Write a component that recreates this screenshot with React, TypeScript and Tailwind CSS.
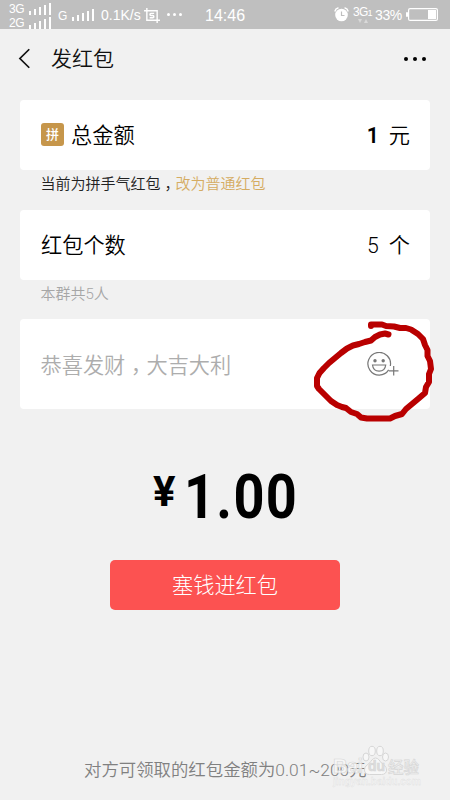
import type { ReactNode } from 'react'

const BARS = [4, 6, 8, 10, 12]

function SignalBars({ className = '' }: { className?: string }) {
  return (
    <div className={`flex items-end gap-[3px] ${className}`}>
      {BARS.map((height) => (
        <span key={height} className="w-[2px] bg-white" style={{ height }} />
      ))}
    </div>
  )
}

function StatusBar() {
  return (
    <div className="relative flex h-[29px] items-center bg-[#bfbfbf] font-['Liberation_Sans'] font-normal text-white">
      <div className="ml-[9px] w-[43px]">
        <div className="flex h-[14px] items-end">
          <span className="w-[20px] text-[12px] leading-[11px] tracking-[-0.5px]">3G</span>
          <SignalBars />
        </div>
        <div className="flex h-[14px] items-end">
          <span className="w-[20px] text-[12px] leading-[11px] tracking-[-0.5px]">2G</span>
          <SignalBars />
        </div>
      </div>
      <span className="ml-[6px] mt-[3px] w-[14px] text-[12px] leading-none">G</span>
      <SignalBars />
      <span className="ml-[7px] mt-px w-[41px] whitespace-nowrap text-[14px] leading-none">0.1K/s</span>
      <svg className="ml-[2px] mt-px h-[15px] w-[16px]" viewBox="0 0 17 16" fill="none" stroke="white" strokeWidth="1.5">
        <path d="M3 0v13h14M0 3h14v13" />
        <path d="M10.8 5.7H7.2c-1.2 0-1.2 2.3 0 2.3h2.3c1.3 0 1.3 2.4 0 2.4H6" />
      </svg>
      <div className="ml-[7px] flex gap-[3px]">
        <span className="size-[3px] rounded-full bg-white" />
        <span className="size-[3px] rounded-full bg-white" />
        <span className="size-[3px] rounded-full bg-white" />
      </div>

      <span className="ml-[23px] mt-[2px] text-[16px] leading-none">14:46</span>

      <div className="ml-auto mr-[12px] flex items-center">
        <svg className="mr-[4px] h-[15px] w-[15px]" viewBox="0 0 15 15" fill="none">
          <circle cx="7.5" cy="8" r="6.3" fill="white" />
          <path d="M1 4Q1.5 1.5 4 1M14 4q-.5-2.5-3-3" stroke="white" strokeWidth="1.4" strokeLinecap="round" />
          <path d="M7.5 4.5v4h3" stroke="#bfbfbf" strokeWidth="1.2" />
        </svg>
        <div className="w-[22px]">
          <div className="whitespace-nowrap text-[12px] leading-[12px] tracking-[-0.7px]">
            3G<span className="text-[9px]">1</span>
          </div>
          <svg className="ml-[5px] h-[4px] w-[10px]" viewBox="0 0 10 4" fill="#d9d9d9">
            <path d="M0 0h4L2 4zM6 4h4L8 0z" />
          </svg>
        </div>
        <span className="mt-px w-[31px] whitespace-nowrap text-[14px] leading-none tracking-[-0.4px]">33%</span>
        <svg className="h-[13px] w-[32px]" viewBox="0 0 32 13" fill="none">
          <rect x="2.6" y=".6" width="28.8" height="11.8" rx="1.5" stroke="white" strokeWidth="1.2" />
          <rect x="0" y="4" width="2" height="5" rx="1" fill="white" />
          <rect x="22" y="2" width="8" height="9" fill="white" />
        </svg>
      </div>
    </div>
  )
}

function NavBar() {
  return (
    <div className="flex h-[61px] items-center pl-[18px] pr-[24px]">
      <svg className="mb-[2px] h-[21px] w-[13px]" viewBox="0 0 13 22" fill="none" stroke="#111" strokeWidth="1.8">
        <path d="M11.5 1.3L1.7 11l9.8 9.7" />
      </svg>
      <h1 className="ml-[20px] text-[21px] leading-none font-[350] text-[#111]">发红包</h1>
      <div className="mb-px ml-auto flex gap-[5px]">
        <span className="size-[4px] rounded-full bg-black" />
        <span className="size-[4px] rounded-full bg-black" />
        <span className="size-[4px] rounded-full bg-black" />
      </div>
    </div>
  )
}

function Row({ label, value, unit }: { label: ReactNode; value: ReactNode; unit: string }) {
  return (
    <div className="flex h-[70px] items-center justify-between rounded-[4px] bg-white pl-[21px] pr-[20px] text-[21.2px] leading-none text-black">
      <div className="flex items-center">{label}</div>
      <div className="flex items-center gap-[10px] pt-[2px]">
        {value}
        <span>{unit}</span>
      </div>
    </div>
  )
}

// comma centred in its full-width cell, resting on the baseline
function Comma() {
  return <span className="inline-block translate-y-[0.3em] font-['Noto_Sans_CJK_TC']">，</span>
}

function EmojiIcon() {
  return (
    <svg className="mt-px h-[26px] w-[33px]" viewBox="0 0 33 26" fill="none" stroke="#777" strokeWidth="1.2">
      <path d="M21.7 17.9A11.3 11.3 0 1 1 23.3 14" />
      <circle cx="8" cy="8.7" r="1.7" fill="#777" stroke="none" />
      <circle cx="16.2" cy="8.7" r="1.7" fill="#777" stroke="none" />
      <path d="M5.5 13h13.2c-.4 3.7-3 6.2-6.6 6.2S5.9 16.7 5.5 13z" />
      <path d="M22 18.8h9.5M26.7 14v9.5" />
    </svg>
  )
}

// hand-drawn marker around the emoji button
function MarkerCircle() {
  return (
    <svg
      className="pointer-events-none absolute left-[292px] top-[-1px] h-[110px] w-[125px]"
      viewBox="312 318 125 110"
      fill="none"
      stroke="#b90000"
      strokeWidth="6"
      strokeLinecap="round"
      strokeLinejoin="round"
    >
      <path d="M388.5 334.5L385 333.5 380 334.5 375 337 371 340.5 365 342 359 344 353 345.5 347 348.5 341 353 335 358 329 363 324 368 319.5 373 317 378 317 386 319 389 323 393 327 397 331 401 337 405 342 407 346 408 351 412 357 414 361 417.5 367 418.5H390L395 416 402 414 406 409 412 404 418 399 425 393 426 387 429 382 429 374 431 369 430 361 427.5 356 427.5 350 425 345 423 339 418 334 411 329.5 406 328 400 328 394 326.5 386 326 382 324.5H371L371 326" />
    </svg>
  )
}

function Watermark() {
  return (
    <div className="absolute left-[333px] top-[745px] h-[46px] w-[94px] font-['Liberation_Sans'] font-bold">
      <svg className="absolute left-[29px] top-0 h-[30px] w-[27px]" viewBox="0 0 27 30" fill="#f7f7f7" stroke="#d6d6d6" strokeWidth="1">
        <ellipse cx="4" cy="12" rx="3" ry="4" />
        <ellipse cx="10" cy="6" rx="3.3" ry="4.7" />
        <ellipse cx="18" cy="6" rx="3.3" ry="4.7" />
        <ellipse cx="23.5" cy="12" rx="3" ry="4" />
        <path d="M13.5 13c-3 0-4 3-6 5s-5 3-5 7c0 3 2 4.5 5 4.5h12c3 0 5-1.5 5-4.5 0-4-3-5-5-7s-3-5-6-5z" />
      </svg>
      <div className="absolute left-0 top-[11px] flex items-center whitespace-nowrap text-[20px] leading-[20px] text-[#f8f8f8]/80 [-webkit-text-stroke:0.6px_#d6d6d6]">
        <span className="w-[35px] tracking-[-0.5px]">Bai</span>
        <span className="w-[20px] text-[14px] text-[#ddd]">du</span>
        <span className="font-['Noto_Sans_CJK_SC'] text-[15.5px] font-medium text-[#eee]">经验</span>
      </div>
      <div className="absolute left-0 top-[32px] whitespace-nowrap text-[10px] leading-none text-[#f4f4f4] [-webkit-text-stroke:0.3px_#dcdcdc]">
        jingyan.baidu.com
      </div>
    </div>
  )
}

export default function App() {
  return (
    <div className="relative flex h-[800px] w-[450px] flex-col overflow-hidden bg-[#f1f1f1] font-['Roboto','Noto_Sans_CJK_SC',sans-serif] font-[350]">
      <StatusBar />
      <NavBar />

      <main className="px-[20px] pt-[10px]">
        <Row
          label={
            <>
              <span className="mr-[7px] flex size-[23px] items-center justify-center rounded-[3px] bg-[#c6964b] text-[13px] font-medium text-white">
                拼
              </span>
              <span className="pt-[2px]">总金额</span>
            </>
          }
          value={<span className="font-semibold">1</span>}
          unit="元"
        />
        <p className="h-[40px] pl-[20.5px] pt-[4px] text-[15px] leading-[18px] text-[#222]">
          当前为拼手气红包<Comma /><span className="text-[#d5ac62]">改为普通红包</span>
        </p>

        <Row label={<span className="pt-[2px]">红包个数</span>} value={<span>5</span>} unit="个" />
        <p className="h-[39px] pl-[20.5px] pt-[5px] text-[15px] leading-[18px] text-[#a6a6a6]">本群共5人</p>

        <div className="relative flex h-[90px] items-center justify-between rounded-[4px] bg-white pl-[20.5px] pr-[30.5px]">
          <span className="pt-[2px] text-[21.2px] leading-none text-[#adadad]">
            恭喜发财<Comma />大吉大利
          </span>
          <EmojiIcon />
          <MarkerCircle />
        </div>

        <div className="mt-[60px] flex h-[55px] items-start pl-[133px] text-black">
          <span className="mr-[8px] text-[42px] leading-[45px] font-bold">¥</span>
          <span className="inline-block origin-left scale-x-[0.88] text-[61.5px] leading-[57px] font-bold tracking-[1.5px]">1.00</span>
        </div>

        <button className="mx-auto mt-[36px] flex h-[50px] w-[230px] items-center justify-center rounded-[5px] bg-[#fc5251] pt-[2px] text-[21.2px] leading-none font-light text-white">
          塞钱进红包
        </button>
      </main>

      <p className="mt-auto mb-[20px] pl-[84px] text-[17.4px] leading-[20px] whitespace-nowrap text-[#808080]">
        对方可领取的红包金额为<span className="font-light">0.01~200</span>元
      </p>
      <Watermark />
    </div>
  )
}
